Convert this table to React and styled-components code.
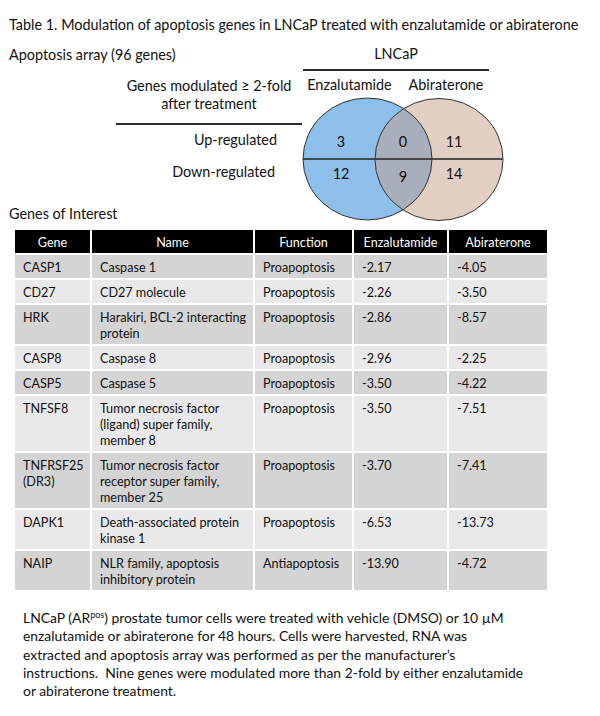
import React from 'react'
import styled, { createGlobalStyle } from 'styled-components'

const GlobalStyle = createGlobalStyle`
  html, body {
    margin: 0;
    padding: 0;
    background: #fff;
  }
  body {
    font-family: Lato, "Open Sans", "Liberation Sans", sans-serif;
    color: #111;
  }
`

// names keep the line breaks of the printed table
const genes = [
  { gene: 'CASP1', name: 'Caspase 1', fn: 'Proapoptosis', enz: '-2.17', abi: '-4.05' },
  { gene: 'CD27', name: 'CD27 molecule', fn: 'Proapoptosis', enz: '-2.26', abi: '-3.50' },
  { gene: 'HRK', name: 'Harakiri, BCL-2 interacting\nprotein', fn: 'Proapoptosis', enz: '-2.86', abi: '-8.57' },
  { gene: 'CASP8', name: 'Caspase 8', fn: 'Proapoptosis', enz: '-2.96', abi: '-2.25' },
  { gene: 'CASP5', name: 'Caspase 5', fn: 'Proapoptosis', enz: '-3.50', abi: '-4.22' },
  { gene: 'TNFSF8', name: 'Tumor necrosis factor\n(ligand) super family,\nmember 8', fn: 'Proapoptosis', enz: '-3.50', abi: '-7.51' },
  { gene: 'TNFRSF25\n(DR3)', name: 'Tumor necrosis factor\nreceptor super family,\nmember 25', fn: 'Proapoptosis', enz: '-3.70', abi: '-7.41' },
  { gene: 'DAPK1', name: 'Death-associated protein\nkinase 1', fn: 'Proapoptosis', enz: '-6.53', abi: '-13.73' },
  { gene: 'NAIP', name: 'NLR family, apoptosis\ninhibitory protein', fn: 'Antiapoptosis', enz: '-13.90', abi: '-4.72' },
]

const Venn = () => (
  <VennSvg width='204' height='128' viewBox='0 0 204 128'>
    <defs>
      <clipPath id='enzClip'>
        <ellipse cx='65.5' cy='63' rx='64.5' ry='61' />
      </clipPath>
    </defs>
    <ellipse cx='65.5' cy='63' rx='64.5' ry='61' fill='#8ebfea' />
    <ellipse cx='137' cy='63.5' rx='64' ry='61' fill='#e3cec4' />
    <ellipse cx='137' cy='63.5' rx='64' ry='61' fill='#a8aebb' clipPath='url(#enzClip)' />
    <line x1='1' x2='201' y1='63' y2='63' stroke='#222' strokeWidth='1.5' />
    <ellipse cx='65.5' cy='63' rx='64.5' ry='61' fill='none' stroke='#333' strokeWidth='1' />
    <ellipse cx='137' cy='63.5' rx='64' ry='61' fill='none' stroke='#333' strokeWidth='1' />
    <text x='39' y='45'>3</text>
    <text x='101' y='45'>0</text>
    <text x='152' y='45'>11</text>
    <text x='39' y='77'>12</text>
    <text x='101' y='80'>9</text>
    <text x='152' y='77'>14</text>
  </VennSvg>
)

const App = () => (
  <Page>
    <GlobalStyle />
    <Title>Table 1. Modulation of apoptosis genes in LNCaP treated with enzalutamide or abiraterone</Title>

    <TopRow>
      <Heading>Apoptosis array (96 genes)</Heading>
      <Ruled>LNCaP</Ruled>
    </TopRow>

    <VennGrid>
      <Labels>
        <Ruled $pad='6px 0 10px'>Genes modulated ≥ 2-fold<br />after treatment</Ruled>
        <RowLabel $top='6px'>Up-regulated</RowLabel>
        <RowLabel $top='14px' $right='2px'>Down-regulated</RowLabel>
      </Labels>
      <VennBox>
        <DrugNames>
          <span>Enzalutamide</span>
          <span>Abiraterone</span>
        </DrugNames>
        <Venn />
      </VennBox>
      <SubHeading>Genes of Interest</SubHeading>
    </VennGrid>

    <Table>
      <colgroup>
        <col style={{ width: 76 }} />
        <col style={{ width: 163 }} />
        <col style={{ width: 99 }} />
        <col style={{ width: 95 }} />
        <col style={{ width: 99 }} />
      </colgroup>
      <thead>
        <tr>
          <th>Gene</th>
          <th>Name</th>
          <th>Function</th>
          <th>Enzalutamide</th>
          <th>Abiraterone</th>
        </tr>
      </thead>
      <tbody>
        {genes.map((g, i) => (
          <Row key={g.gene} $dark={i % 2 === 0}>
            <td>{g.gene}</td>
            <td>{g.name}</td>
            <td>{g.fn}</td>
            <td>{g.enz}</td>
            <td>{g.abi}</td>
          </Row>
        ))}
      </tbody>
    </Table>

    <Caption>
      LNCaP (AR<sup>pos</sup>) prostate tumor cells were treated with vehicle (DMSO) or 10 µM<br />
      enzalutamide or abiraterone for 48 hours. Cells were harvested, RNA was<br />
      extracted and apoptosis array was performed as per the manufacturer’s<br />
      instructions.{'  '}Nine genes were modulated more than 2-fold by either enzalutamide<br />
      or abiraterone treatment.
    </Caption>
  </Page>
)

export default App

const Page = styled.div`
  width: 600px;
  height: 716px;
  box-sizing: border-box;
  padding: 15px 0 0 9px;
  overflow: hidden;
  font-size: 14.4px;
`

const Title = styled.div`
  line-height: 20px;
  white-space: nowrap;
`

const TopRow = styled.div`
  display: grid;
  grid-template-columns: 294px 186px;
  margin-top: 10px;
  line-height: 20px;
`

const Heading = styled.div``

const Ruled = styled.div`
  text-align: center;
  line-height: 18px;
  padding: ${p => p.$pad || '0 0 6px'};
  border-bottom: 2px solid #2b2b2b;
`

const VennGrid = styled.div`
  display: grid;
  grid-template-columns: 107px 186px 210px;
  grid-template-rows: 111px 42px;
`

const Labels = styled.div`
  grid-column: 2;
  grid-row: 1;
  display: flex;
  flex-direction: column;
`

const RowLabel = styled.div`
  text-align: right;
  line-height: 18px;
  margin-top: ${p => p.$top};
  padding-right: ${p => p.$right || '0'};
  margin-right: 25px;
`

const VennBox = styled.div`
  grid-column: 3;
  grid-row: 1 / 3;
  display: flex;
  flex-direction: column;
  padding-top: 5px;
`

const DrugNames = styled.div`
  display: grid;
  grid-template-columns: 95px 98px;
  line-height: 18px;
  text-align: center;
`

const VennSvg = styled.svg`
  display: block;
  margin-top: 2px;

  text {
    font-family: Lato, "Open Sans", sans-serif;
    font-size: 14.4px;
    fill: #111;
    text-anchor: middle;
    dominant-baseline: central;
  }
`

const SubHeading = styled.div`
  grid-column: 1 / 3;
  grid-row: 2;
  align-self: end;
  line-height: 20px;
`

const Table = styled.table`
  margin: 6px 0 0 6px;
  width: 532px;
  table-layout: fixed;
  border-collapse: collapse;
  font-size: 12.6px;
  line-height: 16px;

  th, td {
    padding: 4.5px 2px 2.5px 8px;
    border: 2px solid #fff;
    vertical-align: top;
    text-align: left;
    white-space: pre-line;
  }

  th {
    background: #000;
    color: #fff;
    font-weight: normal;
    text-align: center;
    padding: 4.5px 2px 2.5px;
  }

  tr > :first-child { border-left: none; }
  tr > :last-child { border-right: none; }
  thead th { border-top: none; }
  tbody tr:last-child td { border-bottom: none; }
`

const Row = styled.tr`
  background: ${p => (p.$dark ? '#d4d4d4' : '#e9e9e9')};
`

const Caption = styled.p`
  margin: 19px 0 0 14px;
  font-size: 13.9px;
  line-height: 18.3px;
  white-space: pre-wrap;

  sup {
    font-size: 9px;
    line-height: 0;
    vertical-align: 5px;
  }
`
